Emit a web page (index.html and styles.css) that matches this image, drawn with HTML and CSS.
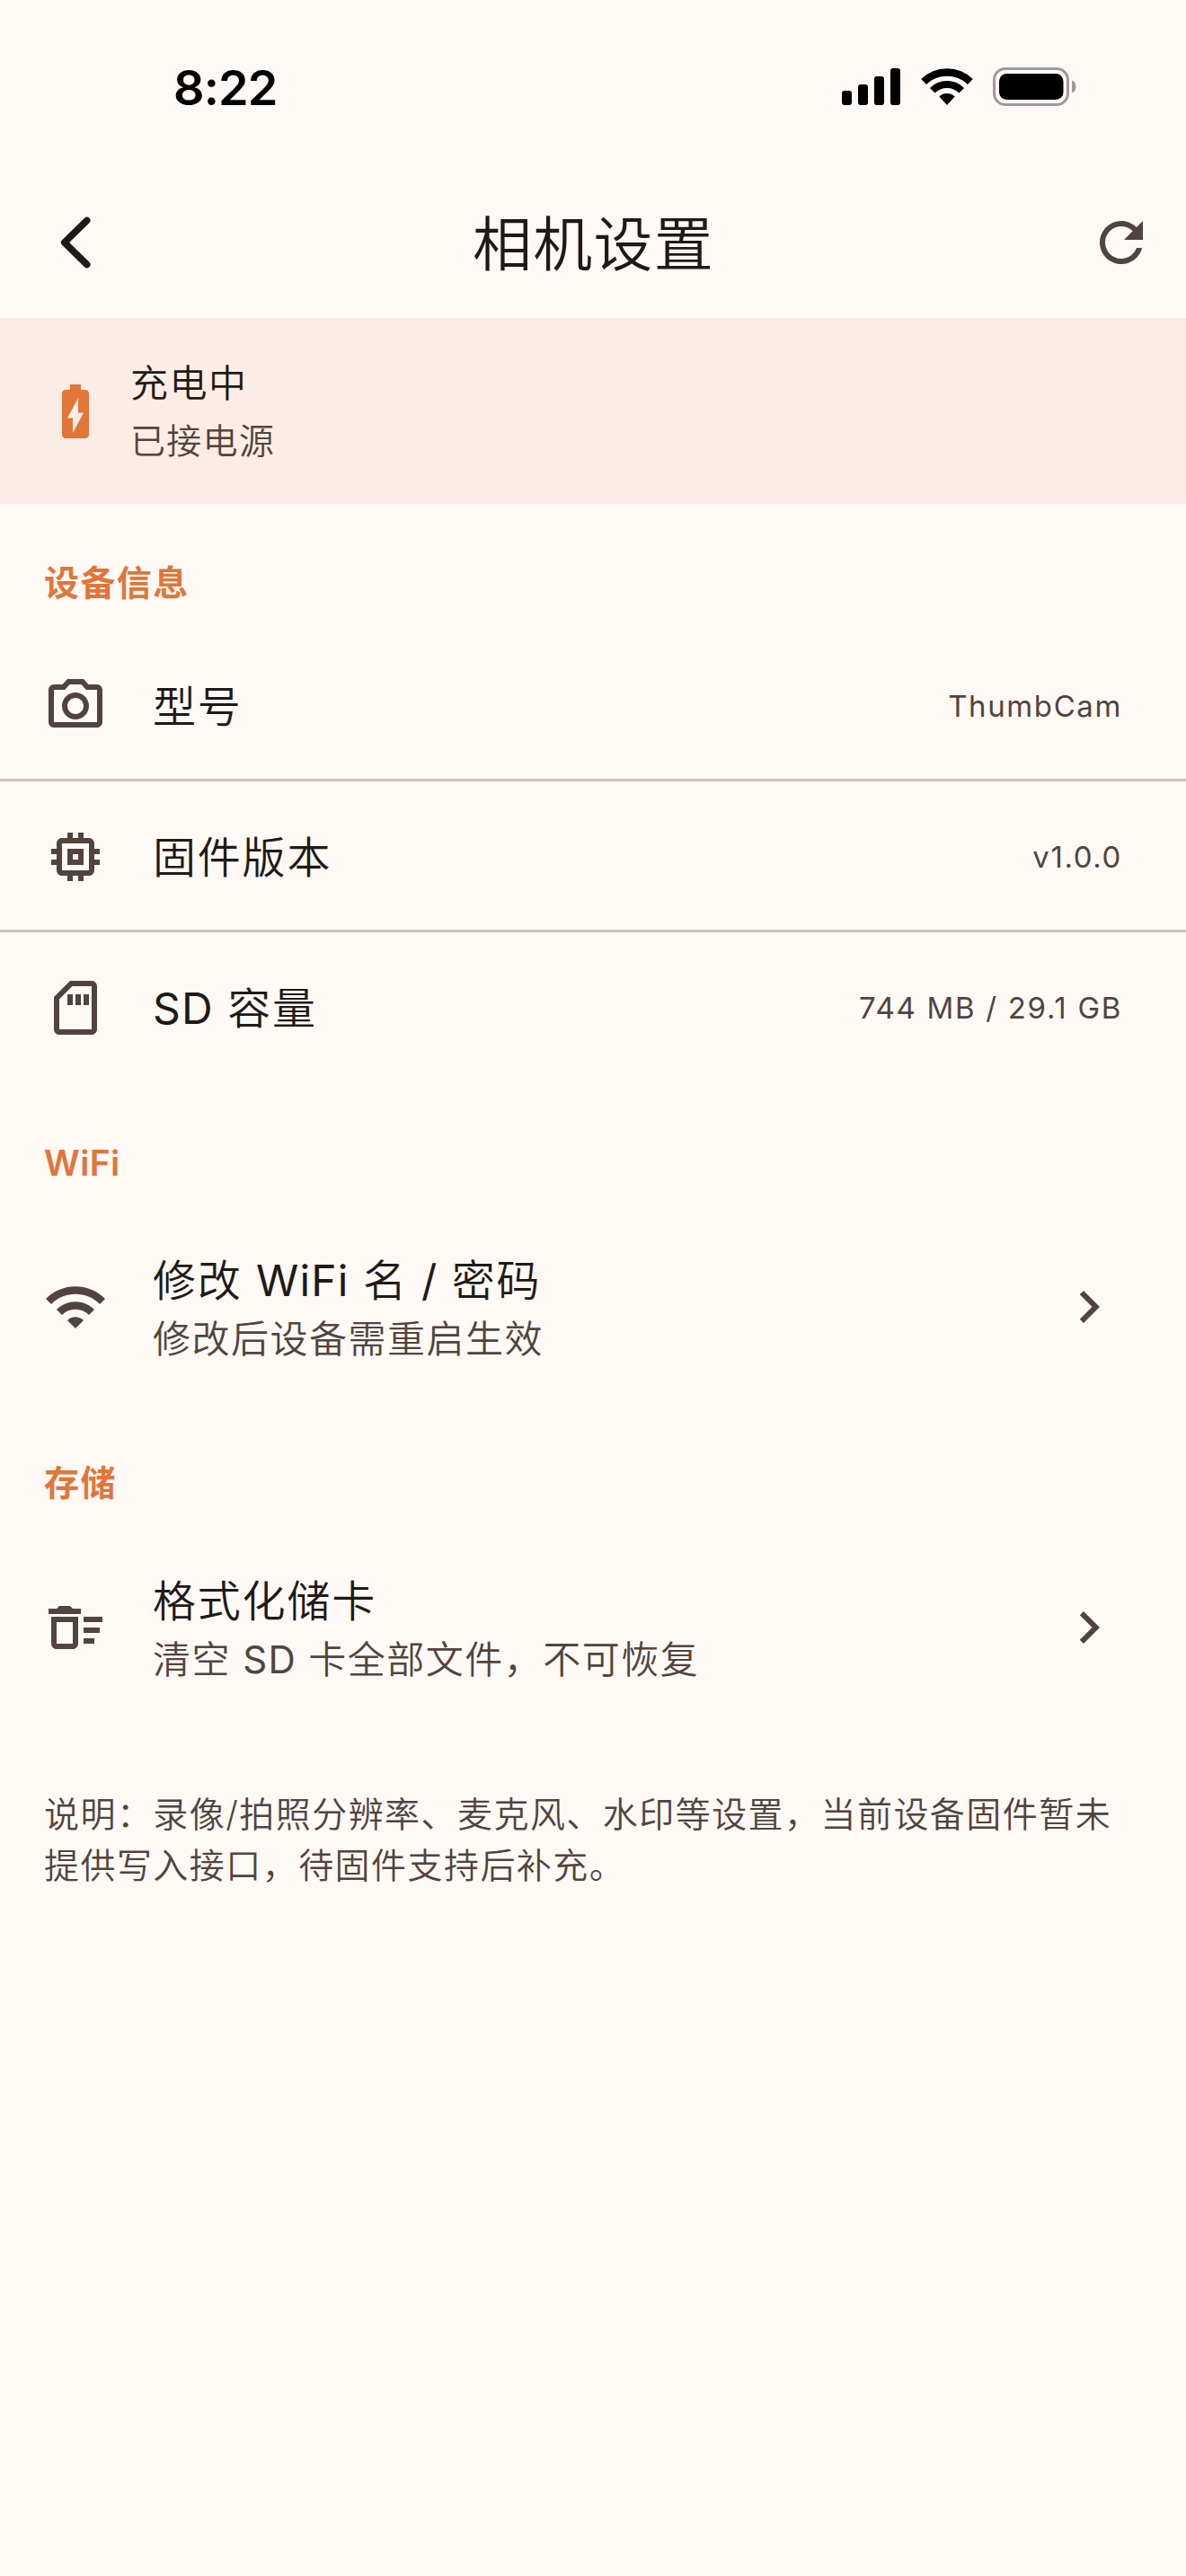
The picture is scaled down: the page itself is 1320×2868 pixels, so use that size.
FILE: index.html
```html
<!DOCTYPE html>
<html lang="zh-CN">
<head>
<meta charset="utf-8">
<title>相机设置</title>
<link rel="stylesheet" href="styles.css">
</head>
<body>
<div class="screen">
  <div class="status-bar">
    <span class="time">8:22</span>
    <div class="status-icons">
      <svg class="signal" width="65" height="41" viewBox="0 0 65 41"><rect x="0" y="25" width="11" height="16" rx="3"/><rect x="18" y="18" width="11" height="23" rx="3"/><rect x="36" y="9" width="11" height="32" rx="3"/><rect x="54" y="0" width="11" height="41" rx="3"/></svg>
      <svg class="wifi" width="58" height="42" viewBox="0 0 58 42"><path d="M.2 13A41 41 0 0 1 57.8 13L52 19A33 33 0 0 0 6 19ZM9.9 22.9A27 27 0 0 1 48.1 22.9L42.4 28.6A19 19 0 0 0 15.6 28.6ZM20.3 32.5A12.6 12.6 0 0 1 37.7 32.5L29 42Z"/></svg>
      <svg class="battery" width="94" height="43" viewBox="0 0 94 43"><rect x="1.5" y="1.5" width="82" height="40" rx="12.5" fill="none" stroke="#a09b99" stroke-width="3"/><rect x="7" y="7" width="71.500" height="29" rx="8.500"/><path d="M88 14.500c6 2 6 12 0 14z" fill="#a09b99"/></svg>
    </div>
  </div>
  <header class="app-bar">
    <svg class="icon back" viewBox="0 0 72 72"><path d="M48.700 11.500 23.700 36l25 24.500" fill="none" stroke="currentColor" stroke-width="7.600" stroke-linecap="round" stroke-linejoin="round"/></svg>
    <h1>相机设置</h1>
    <svg class="icon" viewBox="0 0 24 24"><path d="M17.650 6.350C16.200 4.900 14.210 4 12 4c-4.420 0-7.990 3.580-7.990 8s3.570 8 7.990 8c3.730 0 6.840-2.550 7.730-6h-2.080c-.82 2.330-3.040 4-5.650 4-3.310 0-6-2.690-6-6s2.690-6 6-6c1.660 0 3.140.69 4.220 1.780L13 11h7V4l-2.350 2.350z"/></svg>
  </header>
  <section class="banner">
    <svg class="icon" viewBox="0 0 24 24"><path d="M15.670 4H14V2h-4v2H8.330C7.600 4 7 4.600 7 5.330v15.330C7 21.400 7.600 22 8.330 22h7.330c.74 0 1.340-.6 1.340-1.330V5.330C17 4.600 16.400 4 15.670 4zM11 20v-5.500H9L13 7v5.500h2L11 20z"/></svg>
    <div>
      <div class="banner-title">充电中</div>
      <div class="banner-sub">已接电源</div>
    </div>
  </section>

  <h2>设备信息</h2>
  <div class="row ruled">
    <svg class="icon" viewBox="0 0 24 24"><path d="M20 4h-3.170L15 2H9L7.170 4H4c-1.100 0-2 .9-2 2v12c0 1.100.9 2 2 2h16c1.100 0 2-.9 2-2V6c0-1.100-.9-2-2-2zm0 14H4V6h4.050l1.830-2h4.240l1.830 2H20v12zM12 7c-2.760 0-5 2.240-5 5s2.240 5 5 5 5-2.240 5-5-2.240-5-5-5zm0 8c-1.650 0-3-1.350-3-3s1.350-3 3-3 3 1.350 3 3-1.350 3-3 3z"/></svg>
    <div class="label">型号</div>
    <div class="value">ThumbCam</div>
  </div>
  <div class="row ruled">
    <svg class="icon" viewBox="0 0 24 24"><path d="M9 9v6h6V9H9zm4 4h-2v-2h2v2zm8-2V9h-2V7c0-1.100-.9-2-2-2h-2V3h-2v2h-2V3H9v2H7c-1.100 0-2 .9-2 2v2H3v2h2v2H3v2h2v2c0 1.100.9 2 2 2h2v2h2v-2h2v2h2v-2h2c1.100 0 2-.9 2-2v-2h2v-2h-2v-2h2zm-4 6H7V7h10v10z"/></svg>
    <div class="label">固件版本</div>
    <div class="value">v1.0.0</div>
  </div>
  <div class="row">
    <svg class="icon" viewBox="0 0 24 24"><path d="M18 2h-8L4 8v12c0 1.100.9 2 2 2h12c1.100 0 2-.9 2-2V4c0-1.100-.9-2-2-2zm0 18H6V8.830L10.830 4H18v16zM9 7h2v4H9zm3 0h2v4h-2zm3 0h2v4h-2z"/></svg>
    <div class="label"><span class="latin">SD</span> 容量</div>
    <div class="value capacity">744 MB / 29.1 GB</div>
  </div>

  <h2 class="latin-heading">WiFi</h2>
  <div class="row tall">
    <svg class="icon" viewBox="0 0 24 24"><path d="M1 9l2 2c4.970-4.970 13.030-4.970 18 0l2-2C16.930 2.930 7.080 2.930 1 9zm8 8l3 3 3-3c-1.650-1.660-4.340-1.660-6 0zm-4-4l2 2c2.760-2.760 7.240-2.760 10 0l2-2C15.140 9.140 8.870 9.140 5 13z"/></svg>
    <div class="label">修改 <span class="latin">WiFi</span> 名 <span class="latin">/</span> 密码<div class="sub">修改后设备需重启生效</div></div>
    <svg class="icon" viewBox="0 0 24 24"><path d="M10 6L8.590 7.410 13.170 12l-4.580 4.590L10 18l6-6z"/></svg>
  </div>

  <h2>存储</h2>
  <div class="row tall">
    <svg class="icon" viewBox="0 0 24 24"><path d="M15 16h4v2h-4zm0-8h7v2h-7zm0 4h6v2h-6zM3 18c0 1.100.9 2 2 2h6c1.100 0 2-.9 2-2V8H3v10zm2-8h6v8H5v-8zm5-6H6L5 5H2v2h12V5h-3z"/></svg>
    <div class="label">格式化储卡<div class="sub">清空 <span class="latin">SD</span> 卡全部文件，不可恢复</div></div>
    <svg class="icon" viewBox="0 0 24 24"><path d="M10 6L8.590 7.410 13.170 12l-4.580 4.590L10 18l6-6z"/></svg>
  </div>

  <p class="note">说明：录像/拍照分辨率、麦克风、水印等设置，当前设备固件暂未提供写入接口，待固件支持后补充。</p>
</div>
</body>
</html>
```
FILE: styles.css
```css
* { box-sizing: border-box; }
body {
  margin: 0;
  background: #fff9f6;
  color: #201a17;
  font-family: Inter, "Noto Sans CJK SC", sans-serif;
  font-weight: 350;
}
.screen { width: 1320px; height: 2868px; overflow: hidden; }
h1, h2, p { margin: 0; }
svg { display: block; flex: none; }
.icon { width: 72px; height: 72px; fill: #52443d; }
.latin { font-weight: 400; letter-spacing: 1.200px; }

.status-bar {
  height: 186px;
  padding: 69px 121px 0 193px;
  display: flex;
  justify-content: space-between;
  color: #000;
}
.time { font-size: 54px; line-height: 57px; font-weight: 600; letter-spacing: -0.900px; }
.status-icons { display: flex; align-items: flex-start; padding-top: 6px; }
.signal { margin: 1px 23px 0 0; }
.wifi { margin-right: 22px; }

.app-bar {
  height: 168px;
  padding: 0 36px 0 48px;
  display: grid;
  grid-template-columns: 72px 1fr 72px;
  align-items: center;
}
.back { color: #201a17; }
h1 {
  padding: 3px 11px 0 0;
  font-size: 66px;
  line-height: 84px;
  font-weight: 350;
  letter-spacing: 1.300px;
  text-align: center;
}

.banner {
  height: 207px;
  padding: 0 48px;
  display: flex;
  align-items: center;
  gap: 25px;
  background: #fbece5;
}
.banner .icon { fill: #e27639; }
.banner-title { font-size: 42px; line-height: 65px; letter-spacing: 1.500px; }
.banner-sub { font-size: 39px; line-height: 63px; letter-spacing: 1.300px; color: #52443d; }

h2 {
  padding: 59px 48px 25px 49px;
  font-size: 39px;
  line-height: 57px;
  font-weight: 600;
  letter-spacing: 1.400px;
  color: #e0763a;
}
.latin-heading { padding-top: 60px; padding-bottom: 24px; letter-spacing: 0.400px; }
.row {
  height: 168px;
  padding: 0 71px 0 48px;
  display: flex;
  align-items: center;
}
.ruled { box-shadow: inset 0 -3px #d2c2ba; }
.tall { height: 216px; padding-right: 72px; }
.label {
  flex: 1;
  padding: 2px 0 0 50px;
  font-size: 48px;
  line-height: 72px;
  letter-spacing: 1.800px;
}
.tall .label { padding-top: 1px; line-height: 70px; }
.tall .sub { font-size: 42px; line-height: 60px; letter-spacing: 1.500px; color: #52443d; }
.value { font-size: 33px; line-height: 48px; font-weight: 400; letter-spacing: 1.600px; color: #52443d; }
.capacity { letter-spacing: 1.700px; }
.note {
  padding: 71px 48px 0 49px;
  font-size: 39px;
  line-height: 57px;
  letter-spacing: 1.450px;
  color: #52443d;
}
```
